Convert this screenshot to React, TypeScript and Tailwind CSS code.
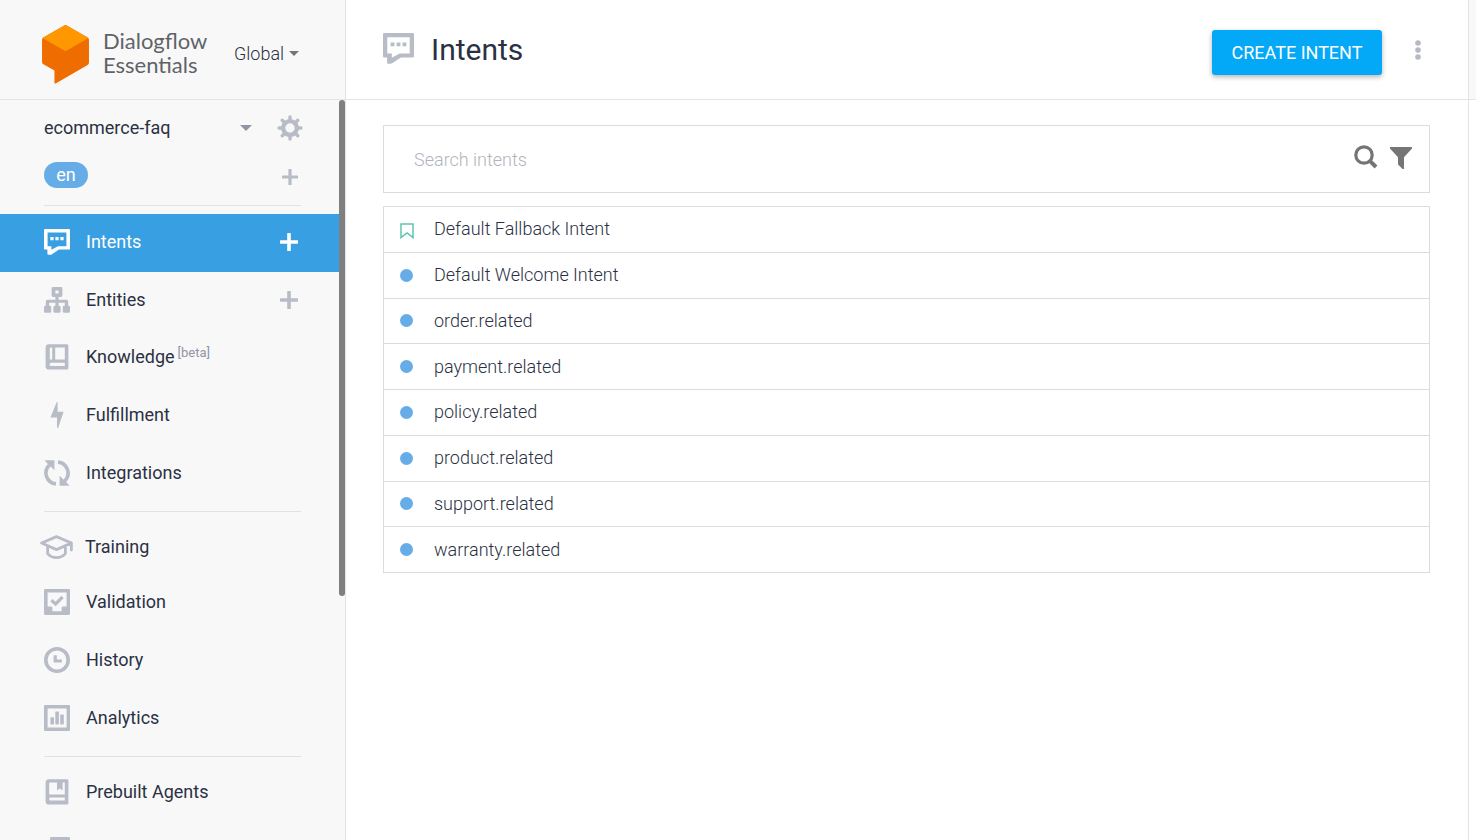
import React from "react";

type IconProps = { className?: string };

function ChatIcon({ className }: IconProps) {
  return (
    <svg viewBox="0 0 26 26" className={className} fill="currentColor" aria-hidden="true">
      <path
        fillRule="evenodd"
        d="M1.2 0H24.8Q26 0 26 1.2V19.4Q26 20.6 24.8 20.6H15L8 25.2Q7.2 25.8 6.2 25.8H4.4Q3.4 25.8 3.4 24.8V20.6H1.2Q0 20.6 0 19.4V1.2Q0 0 1.2 0ZM3.6 3.6V17.2H7.4V20.8L14 17.2H22.4V3.6Z"
      />
      <path d="M6.4 8H9.6V11.2H6.4ZM11.4 8H14.6V11.2H11.4ZM16.4 8H19.6V11.2H16.4Z" />
    </svg>
  );
}

function EntitiesIcon({ className }: IconProps) {
  return (
    <svg viewBox="0 0 26 26" className={className} fill="currentColor" aria-hidden="true">
      <path
        fillRule="evenodd"
        d="M9 0H17Q18.4 0 18.4 1.4V8.6Q18.4 10 17 10H14.6V12.8H22.6Q24.2 12.8 24.2 14.4V18.8H24.6Q26 18.8 26 20.2V24.4Q26 25.8 24.6 25.8H20.2Q18.8 25.8 18.8 24.4V20.2Q18.8 18.8 20.2 18.8H20.8V15.8H14.6V18.8H15.2Q16.6 18.8 16.6 20.2V24.4Q16.6 25.8 15.2 25.8H10.8Q9.4 25.8 9.4 24.4V20.2Q9.4 18.8 10.8 18.8H11.4V15.8H5.2V18.8H5.8Q7.2 18.8 7.2 20.2V24.4Q7.2 25.8 5.8 25.8H1.4Q0 25.8 0 24.4V20.2Q0 18.8 1.4 18.8H1.8V14.4Q1.8 12.8 3.4 12.8H11.4V10H9Q7.6 10 7.6 8.6V1.4Q7.6 0 9 0ZM11.4 3.4V6.6H14.6V3.4Z"
      />
    </svg>
  );
}

function KnowledgeIcon({ className }: IconProps) {
  return (
    <svg viewBox="0 0 26 26" className={className} fill="currentColor" aria-hidden="true">
      <path
        fillRule="evenodd"
        d="M5 .2H23Q24.4 .2 24.4 1.6V24.2Q24.4 25.6 23 25.6H5Q1.6 25.6 1.6 22.2V3.6Q1.6 .2 5 .2ZM7 3.6Q5.8 3.6 5.8 4.8V15.6H8.2V3.6ZM11.2 3.6V15.6H20.8V3.6ZM6.8 18.8Q5.6 18.8 5.6 20.4T6.8 22H20.8V18.8Z"
      />
    </svg>
  );
}

function BoltIcon({ className }: IconProps) {
  return (
    <svg viewBox="0 0 26 26" className={className} fill="currentColor" aria-hidden="true">
      <path d="M12.8 0H13.6V9.8H19.6L14.2 25.8H13V15.6H6.4Z" />
    </svg>
  );
}

function IntegrationsIcon({ className }: IconProps) {
  return (
    <svg viewBox="0 0 26 26" className={className} aria-hidden="true">
      <g fill="none" stroke="currentColor" strokeWidth="3.6">
        <path d="M12 23.9A11 11 0 0 1 5.4 5" />
        <path d="M14 2.1A11 11 0 0 1 20.6 21" />
      </g>
      <path fill="currentColor" d="M.4 .2H10.4V10.2L7.4 7.2L4.6 4.8ZM25.6 25.8H15.6V15.8L18.6 18.8L21.4 21.2Z" />
    </svg>
  );
}

function TrainingIcon({ className }: IconProps) {
  return (
    <svg
      viewBox="0 0 33 25"
      className={className}
      fill="none"
      stroke="currentColor"
      strokeWidth="2.8"
      strokeLinejoin="round"
      strokeLinecap="round"
      aria-hidden="true"
    >
      <path d="M1.6 8L16.5 1.6L31.4 8L16.5 14.6ZM31.4 8V15M7.6 11V18.6Q11 22.6 16.5 22.6T25.4 18.6V11" />
    </svg>
  );
}

function ValidationIcon({ className }: IconProps) {
  return (
    <svg viewBox="0 0 26 26" className={className} fill="currentColor" aria-hidden="true">
      <path
        fillRule="evenodd"
        d="M1.4 0H24.6Q26 0 26 1.4V24.6Q26 26 24.6 26H1.4Q0 26 0 24.6V1.4Q0 0 1.4 0ZM3.6 3.4V17.6H7Q8.4 17.6 8.4 19V22.2H17.6V19Q17.6 17.6 19 17.6H22.6V3.4Z"
      />
      <path d="M7.4 11.2L11.6 15L18.6 8" fill="none" stroke="currentColor" strokeWidth="3.2" />
    </svg>
  );
}

function HistoryIcon({ className }: IconProps) {
  return (
    <svg viewBox="0 0 26 26" className={className} fill="none" stroke="currentColor" aria-hidden="true">
      <circle cx="13" cy="13" r="11.2" strokeWidth="3.6" />
      <path d="M11.2 8.2V14H17.8" strokeWidth="3.2" />
    </svg>
  );
}

function AnalyticsIcon({ className }: IconProps) {
  return (
    <svg viewBox="0 0 26 26" className={className} fill="currentColor" aria-hidden="true">
      <path
        fillRule="evenodd"
        d="M1.2 0H24.8Q26 0 26 1.2V24.8Q26 26 24.8 26H1.2Q0 26 0 24.8V1.2Q0 0 1.2 0ZM3.6 3.6V22.4H22.6V3.6Z"
      />
      <rect x="6.4" y="12.2" width="3.6" height="7.2" rx=".6" />
      <rect x="11.3" y="6.4" width="3.6" height="13" rx=".6" />
      <rect x="16.2" y="9.4" width="3.6" height="10" rx=".6" />
    </svg>
  );
}

function AgentsIcon({ className }: IconProps) {
  return (
    <svg viewBox="0 0 26 26" className={className} fill="currentColor" aria-hidden="true">
      <path
        fillRule="evenodd"
        d="M5 .2H23Q24.4 .2 24.4 1.6V24.2Q24.4 25.6 23 25.6H5Q1.6 25.6 1.6 22.2V3.6Q1.6 .2 5 .2ZM5.2 3.6V15.4H20.8V3.6H18.6V11.6L15.8 9.6L13 11.6V3.6ZM6.2 18.6Q5.2 18.6 5.2 20T6.2 21.4H20.8V18.6Z"
      />
    </svg>
  );
}

function SmallTalkIcon({ className }: IconProps) {
  return (
    <svg viewBox="0 0 26 26" className={className} fill="currentColor" aria-hidden="true">
      <path d="M7.4 0H24.6Q26 0 26 1.4V17H6V1.4Q6 0 7.4 0Z" />
      <path d="M0 8H4V20H20V24H1.4Q0 24 0 22.6Z" />
    </svg>
  );
}

function GearIcon({ className }: IconProps) {
  return (
    <svg viewBox="0 0 26 26" className={className} fill="none" stroke="currentColor" aria-hidden="true">
      <circle cx="13" cy="13" r="6.9" strokeWidth="4.4" />
      <path
        strokeWidth="3.4"
        strokeLinecap="round"
        d="M13 5V2M13 21V24M5 13H2M21 13H24M7.4 7.4L5.2 5.2M18.6 7.4L20.8 5.2M7.4 18.6L5.2 20.8M18.6 18.6L20.8 20.8"
      />
    </svg>
  );
}

function PlusIcon({ className }: IconProps) {
  return (
    <svg viewBox="0 0 18 18" className={className} fill="currentColor" aria-hidden="true">
      <path d="M7.2 .6Q7.2 0 7.8 0H10.2Q10.8 0 10.8 .6V7.2H17.4Q18 7.2 18 7.8V10.2Q18 10.8 17.4 10.8H10.8V17.4Q10.8 18 10.2 18H7.8Q7.2 18 7.2 17.4V10.8H.6Q0 10.8 0 10.2V7.8Q0 7.2 .6 7.2H7.2Z" />
    </svg>
  );
}

function Caret({ className }: IconProps) {
  return (
    <svg viewBox="0 0 12 6" className={className} fill="currentColor" aria-hidden="true">
      <path d="M0 0H12L6 6Z" />
    </svg>
  );
}

function Logo() {
  return (
    <svg viewBox="0 0 140 176" className="mt-[2px] h-[59px] w-[47px] shrink-0" aria-hidden="true">
      <path
        fill="#ef6c00"
        d="M70 0Q72 0 75 2L136 37Q140 39 140 44V112Q140 117 136 119L42 174Q37 177 37 171V136L4 117Q0 115 0 110V44Q0 39 4 37L65 2Q68 0 70 0Z"
      />
      <path fill="#ff9800" d="M65 2Q70 -1 75 2L136 37Q138 38 138.500 39L70 78L1.500 39Q2 38 4 37Z" />
    </svg>
  );
}

type Item = {
  label: string;
  icon: (p: IconProps) => React.JSX.Element;
  active?: boolean;
  add?: boolean;
  beta?: boolean;
  wide?: boolean;
  iconOnly?: boolean;
};

type Group = { className: string; items: Item[] };

const groups: Group[] = [
  {
    className: "grid min-h-[305px] auto-rows-fr py-2",
    items: [
      { label: "Intents", icon: ChatIcon, active: true, add: true },
      { label: "Entities", icon: EntitiesIcon, add: true },
      { label: "Knowledge", icon: KnowledgeIcon, beta: true },
      { label: "Fulfillment", icon: BoltIcon },
      { label: "Integrations", icon: IntegrationsIcon },
    ],
  },
  {
    className: "py-2",
    items: [
      { label: "Training", icon: TrainingIcon, wide: true },
      { label: "Validation", icon: ValidationIcon },
      { label: "History", icon: HistoryIcon },
      { label: "Analytics", icon: AnalyticsIcon },
    ],
  },
  {
    className: "pt-[7px]",
    items: [
      { label: "Prebuilt Agents", icon: AgentsIcon },
      { label: "Small Talk", icon: SmallTalkIcon, iconOnly: true },
    ],
  },
];

function NavItem({ item, stretch }: { item: Item; stretch: boolean }) {
  const Icon = item.icon;
  const size = item.wide ? "h-[54px] pl-10" : stretch ? "pb-[2px] pl-11" : "h-[58px] pb-[2px] pl-11";
  return (
    <li className={`flex items-center justify-between pr-[41px] ${size} ${item.active ? "bg-[#38a0e2]" : ""}`}>
      <a
        href="#"
        aria-label={item.iconOnly ? item.label : undefined}
        className={`flex items-center ${item.wide ? "gap-3" : "gap-4"}`}
      >
        <Icon
          className={`shrink-0 ${item.wide ? "h-[25px] w-[33px]" : "size-[26px]"} ${
            item.active ? "text-white" : "text-[#b7bcc6]"
          }`}
        />
        {!item.iconOnly && (
          <span className={item.active ? "text-white" : "text-[#2b3143]"}>
            {item.label}
            {item.beta && <sup className="ml-[3px] text-[13px] text-[#8f95a6]">[beta]</sup>}
          </span>
        )}
      </a>
      {item.add && (
        <button type="button" aria-label={`Create ${item.label}`}>
          <PlusIcon className={`size-[18px] ${item.active ? "text-white" : "text-[#b7bcc6]"}`} />
        </button>
      )}
    </li>
  );
}

function Sidebar() {
  return (
    <aside className="flex w-[346px] shrink-0 flex-col border-r border-[#e4e4e4] bg-[#f8f8f8]">
      <div className="flex h-[100px] shrink-0 items-center border-b border-[#e4e4e4] pt-2 pl-[42px]">
        <a href="#" className="flex items-center gap-[14px]">
          <Logo />
          <span className="w-[104px] pb-[2px] font-[Lato] text-[22px] leading-6 text-[#5f6368]">
            Dialogflow Essentials
          </span>
        </a>
        <div className="ml-[27px] grid w-[65px] items-center text-[#2b3143]">
          <select
            aria-label="Region"
            className="col-start-1 row-start-1 appearance-none bg-transparent text-lg font-light"
          >
            <option>Global</option>
          </select>
          <Caret className="pointer-events-none col-start-1 row-start-1 h-[5px] w-[10px] justify-self-end text-[#757575]" />
        </div>
      </div>
      <div className="flex min-h-0 flex-1">
        <nav className="min-w-0 flex-1 overflow-hidden text-lg" aria-label="Agent">
          <div className="flex h-14 items-center justify-between pr-9 pl-11">
            <div className="grid w-52 items-center text-[#2b3143]">
              <select aria-label="Agent" className="col-start-1 row-start-1 appearance-none bg-transparent">
                <option>ecommerce-faq</option>
              </select>
              <Caret className="pointer-events-none col-start-1 row-start-1 h-[6px] w-3 justify-self-end text-[#8f94a8]" />
            </div>
            <button type="button" aria-label="Agent settings">
              <GearIcon className="size-[26px] text-[#b7bcc6]" />
            </button>
          </div>
          <div className="flex h-[49px] items-start justify-between pt-[6px] pr-[41px] pl-11">
            <a href="#" className="h-[26px] w-11 rounded-full bg-[#66ade8] text-center leading-[26px] text-white">
              en
            </a>
            <button type="button" aria-label="Add language" className="flex h-[30px] items-center">
              <PlusIcon className="size-4 text-[#b7bcc6]" />
            </button>
          </div>
          {groups.map((group, i) => (
            <div key={i}>
              <hr className="mr-[38px] ml-11 border-[#e2e2e2]" />
              <ul className={group.className}>
                {group.items.map((item) => (
                  <NavItem key={item.label} item={item} stretch={i === 0} />
                ))}
              </ul>
            </div>
          ))}
        </nav>
        <div className="w-[6px] shrink-0">
          <div className="h-[67%] rounded-full bg-[#7f7f7f]" />
        </div>
      </div>
    </aside>
  );
}

const intents = [
  "Default Fallback Intent",
  "Default Welcome Intent",
  "order.related",
  "payment.related",
  "policy.related",
  "product.related",
  "support.related",
  "warranty.related",
];

function BookmarkIcon() {
  return (
    <svg viewBox="0 0 14 16" className="mt-1 h-4 w-[14px]" fill="none" stroke="#5cc5b0" strokeWidth="1.5" aria-hidden="true">
      <path d="M1 1H13V14.600L7 10L1 14.600Z" />
    </svg>
  );
}

export default function App() {
  return (
    <div className="flex h-screen overflow-hidden bg-white font-[Roboto,sans-serif]">
      <Sidebar />
      <main className="flex min-w-0 flex-1 flex-col">
        <header className="flex h-[100px] shrink-0 border-b border-[#e4e4e4]">
          <div className="flex flex-1 items-center pr-[38px] pl-[37px]">
            <ChatIcon className="mb-[2px] size-[31px] text-[#b7bcc6]" />
            <h1 className="ml-[17px] text-3xl text-[#2b3143]">Intents</h1>
            <button
              type="button"
              className="mt-[6px] ml-auto h-[45px] w-[170px] rounded-[3px] bg-[#03a9f7] text-lg text-white shadow-[0_2px_5px_rgba(0,0,0,0.3)]"
            >
              CREATE INTENT
            </button>
            <button type="button" aria-label="More options" className="ml-6 w-6">
              <svg viewBox="0 0 6 20" className="mx-auto h-5 w-[6px]" fill="#b4b9c3" aria-hidden="true">
                <circle cx="3" cy="3" r="2.8" />
                <circle cx="3" cy="10" r="2.8" />
                <circle cx="3" cy="17" r="2.8" />
              </svg>
            </button>
          </div>
          <div className="w-2 border-l border-[#e4e4e4] bg-[#f8f8f8]" />
        </header>
        <div className="flex flex-1">
          <div className="min-w-0 flex-1 pt-[25px] pr-[38px] pl-[37px]">
            <form className="flex h-[68px] items-center border border-[#dcdcdc] pr-[17px] pl-[30px]">
              <input
                type="text"
                aria-label="Search intents"
                placeholder="Search intents"
                className="min-w-0 flex-1 pt-[2px] text-lg font-light text-[#2b3143] outline-none placeholder:text-[#b0b4bc]"
              />
              <button type="button" aria-label="Search">
                <svg viewBox="0 0 24 24" className="mb-1 size-6" fill="none" stroke="#757575" aria-hidden="true">
                  <circle cx="10" cy="10" r="8.2" strokeWidth="3.2" />
                  <path d="M15.600 15.600L22 22" strokeWidth="4" />
                </svg>
              </button>
              <button type="button" aria-label="Filter" className="ml-3">
                <svg viewBox="0 0 22 22" className="mb-[2px] size-[22px]" fill="#757575" aria-hidden="true">
                  <path d="M0 0H22V1.600L14 10.200V22H12.600L8 17.400V10.200L0 1.600Z" />
                </svg>
              </button>
            </form>
            <ul className="mt-[13px] grid min-h-[367px] auto-rows-fr border-x border-b border-[#dcdcdc]">
              {intents.map((name, i) => (
                <li key={name} className="flex items-center border-t border-[#dcdcdc] pl-4">
                  <span className="flex w-[14px] shrink-0">
                    {i === 0 ? <BookmarkIcon /> : <span className="size-[13px] rounded-full bg-[#66ade8]" />}
                  </span>
                  <a href="#" className="ml-5 text-lg font-light text-[#2b3143]">
                    {name}
                  </a>
                </li>
              ))}
            </ul>
          </div>
          <div className="w-2 border-l border-[#e4e4e4]" />
        </div>
      </main>
    </div>
  );
}
